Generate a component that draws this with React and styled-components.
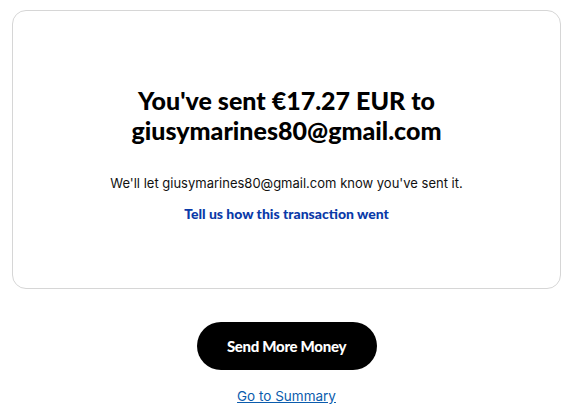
import React from "react";
import styled, { createGlobalStyle } from "styled-components";

const GlobalStyle = createGlobalStyle`
  body {
    margin: 0;
    background: #ffffff;
    font-family: "Inter", "Liberation Sans", sans-serif;
    color: #000000;
  }
`;

const Page = styled.div`
  display: flex;
  flex-direction: column;
  align-items: center;
  padding: 10px 7px 0 12px;
`;

const Card = styled.section`
  box-sizing: border-box;
  width: 100%;
  height: 279px;
  border: 1px solid #d6d6d6;
  border-radius: 14px;
  display: flex;
  flex-direction: column;
  align-items: center;
  padding-top: 74px;
  text-align: center;
`;

const Heading = styled.h1`
  margin: 0 0 29px;
  font-family: "Lato", sans-serif;
  font-weight: 900;
  font-size: 25px;
  line-height: 30px;
  letter-spacing: 0;
  color: #000000;
`;

const Note = styled.p`
  margin: 0 0 13px;
  font-size: 13px;
  line-height: 18px;
  color: #111111;
`;

const TextLink = styled.a`
  font-family: "Lato", sans-serif;
  font-weight: 900;
  font-size: 14px;
  line-height: 18px;
  color: #0a3aa8;
  text-decoration: none;
  cursor: pointer;
`;

const PrimaryButton = styled.button`
  margin: 33px 0 0;
  width: 180px;
  height: 48px;
  border: none;
  border-radius: 24px;
  background: #000000;
  color: #ffffff;
  font-family: "Lato", sans-serif;
  font-weight: 900;
  font-size: 15px;
  letter-spacing: -0.3px;
  cursor: pointer;
`;

const Footer = styled.div`
  margin-top: 16px;
  line-height: 18px;
`;

const SummaryLink = styled.a`
  font-family: "Inter", "Liberation Sans", sans-serif;
  font-size: 13.5px;
  color: #0b5cad;
  text-decoration: underline;
  cursor: pointer;
`;

export default function App() {
  const email = "giusymarines80@gmail.com";
  return (
    <>
      <GlobalStyle />
      <Page>
        <Card>
          <Heading>
            You've sent €17.27 EUR to
            <br />
            {email}
          </Heading>
          <Note>We'll let {email} know you've sent it.</Note>
          <TextLink>Tell us how this transaction went</TextLink>
        </Card>
        <PrimaryButton>Send More Money</PrimaryButton>
        <Footer>
          <SummaryLink>Go to Summary</SummaryLink>
        </Footer>
      </Page>
    </>
  );
}
